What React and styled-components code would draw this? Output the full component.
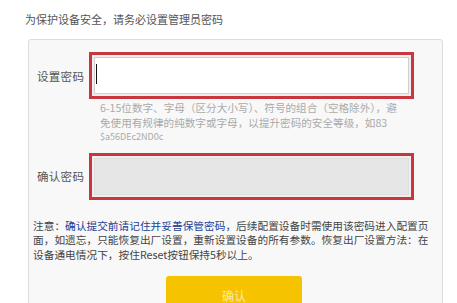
import React from 'react';
import styled, { createGlobalStyle } from 'styled-components';

const GlobalStyle = createGlobalStyle`
  body {
    margin: 0;
    background: #ffffff;
    font-family: "Noto Sans CJK SC", "Liberation Sans", sans-serif;
    overflow: hidden;
  }
`;

export default function App() {
  return (
    <Page>
      <GlobalStyle />
      <Title>为保护设备安全，请务必设置管理员密码</Title>
      <Panel>
        <Row>
          <Label>设置密码</Label>
          <Highlight>
            <Input>
              <Caret />
            </Input>
          </Highlight>
        </Row>
        <Hint>
          <span>6-15位数字、字母（区分大小写）、符号的组合（空格除外），避</span>
          <span>免使用有规律的纯数字或字母，以提升密码的安全等级，如83</span>
          <span>$a56DEc2ND0c</span>
        </Hint>
        <Row $confirm>
          <Label>确认密码</Label>
          <Highlight>
            <Input $disabled />
          </Highlight>
        </Row>
        <Notice>
          <span>
            注意：<Strong>确认提交前请记住并妥善保管密码</Strong>，后续配置设备时需使用该密码进入配置页
          </span>
          <span>面，如遗忘，只能恢复出厂设置，重新设置设备的所有参数。恢复出厂设置方法：在</span>
          <span>设备通电情况下，按住Reset按钮保持5秒以上。</span>
        </Notice>
        <ButtonRow>
          <SubmitButton>确认</SubmitButton>
        </ButtonRow>
      </Panel>
    </Page>
  );
}

const Page = styled.div`
  padding: 11px 14px 0 25px;
  height: 303px;
  box-sizing: border-box;
  overflow: hidden;
`;

const Title = styled.div`
  font-size: 11px;
  color: #555;
  line-height: 16px;
  margin-bottom: 12px;
`;

const Panel = styled.div`
  margin-left: 3px;
  width: 415px;
  height: 300px;
  box-sizing: border-box;
  border: 1px solid #dcdcdc;
  border-radius: 3px;
  background: #f8f8f8;
  padding: 12px 0 0 4px;
`;

const Row = styled.div`
  display: flex;
  align-items: center;
  margin-top: ${(p) => (p.$confirm ? '8px' : '0')};
`;

const Label = styled.div`
  width: 52px;
  padding-left: 4px;
  font-size: 11.5px;
  color: #555;
  letter-spacing: 0.3px;
`;

const Highlight = styled.div`
  width: 325px;
  height: 47px;
  box-sizing: border-box;
  border: 3px solid #c8363e;
  padding: 2px;
  background: #f4eded;
`;

const Input = styled.div`
  position: relative;
  height: 100%;
  box-sizing: border-box;
  border: 1px solid ${(p) => (p.$disabled ? '#dedede' : '#cfcfcf')};
  background: ${(p) => (p.$disabled ? '#e6e6e6' : '#ffffff')};
`;

const Caret = styled.span`
  position: absolute;
  left: 1px;
  top: 6px;
  width: 1px;
  height: 20px;
  background: #111;
`;

const Hint = styled.div`
  display: flex;
  flex-direction: column;
  margin: 2px 0 0 67px;
  font-size: 10.6px;
  line-height: 14.5px;
  color: #aaa;
  white-space: nowrap;
  span:last-child {
    font-size: 9px;
  }
`;

const Notice = styled.div`
  display: flex;
  flex-direction: column;
  margin-top: 19px;
  font-size: 10.7px;
  line-height: 14.5px;
  color: #444;
  white-space: nowrap;
`;

const Strong = styled.span`
  color: #1d3f95;
`;

const ButtonRow = styled.div`
  display: flex;
  margin: 14px 0 0 133px;
`;

const SubmitButton = styled.button`
  width: 136px;
  height: 36px;
  border: none;
  border-radius: 3px;
  background: #f6c300;
  color: #fde9a6;
  font-family: inherit;
  font-size: 12px;
  padding-top: 4px;
`;
